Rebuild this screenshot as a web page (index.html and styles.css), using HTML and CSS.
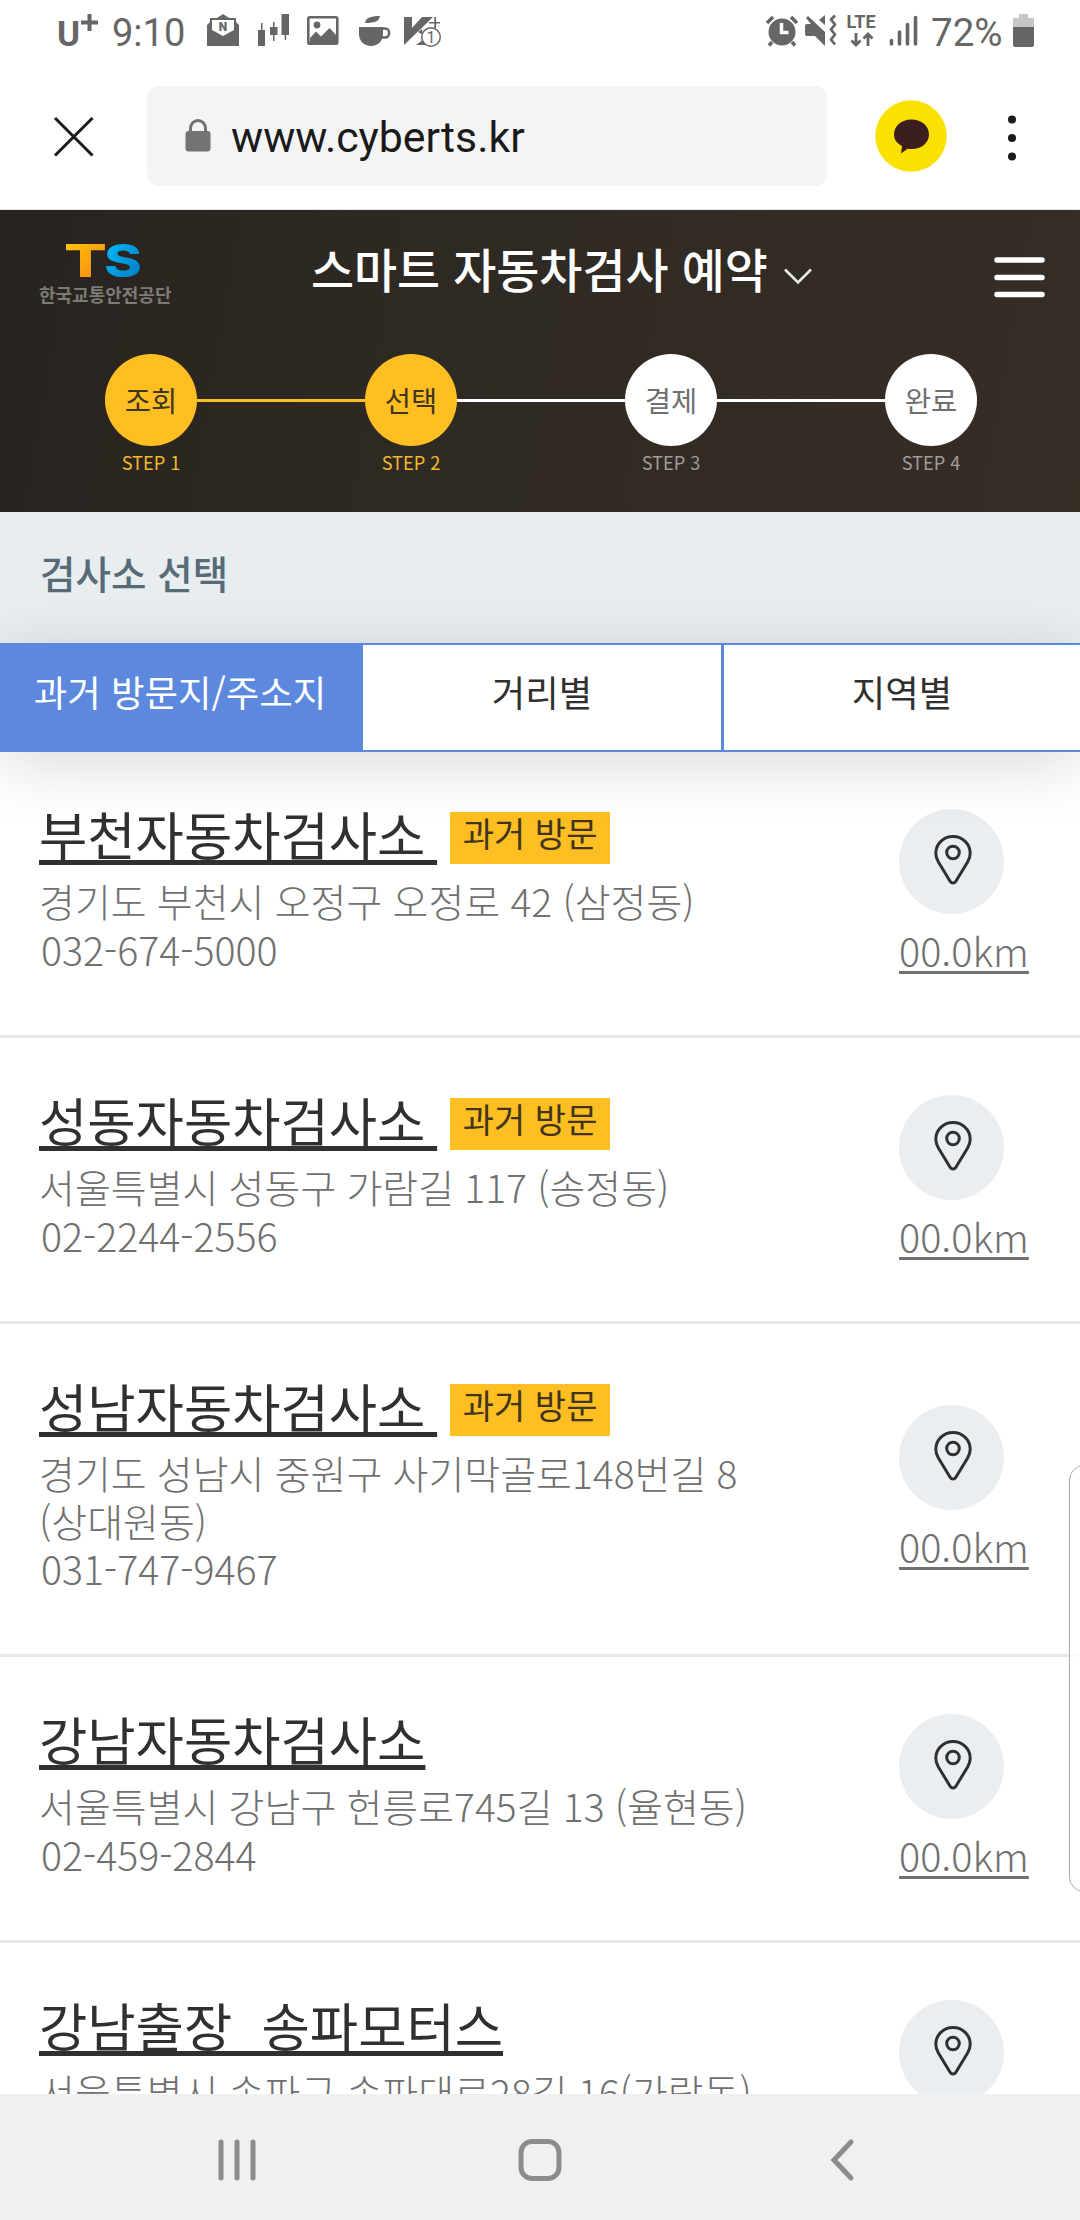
FILE: index.html
```html
<!DOCTYPE html>
<html lang="ko">
<head>
<meta charset="utf-8">
<title>스마트 자동차검사 예약</title>
<link rel="stylesheet" href="styles.css">
</head>
<body>
<svg class="defs" width="0" height="0">
  <symbol id="pin" viewBox="0 0 38 50">
    <path d="M19 1.600C9.500 1.600 1.800 9 1.800 18.200c0 3.200.9 5.800 2.600 8.800l11.700 19.200c1.500 2.400 4.300 2.400 5.800 0L33.600 27c1.700-3 2.600-5.600 2.600-8.800C36.200 9 28.500 1.600 19 1.600z"/>
    <circle cx="19" cy="17.500" r="6.300"/>
  </symbol>
</svg>
<div class="screen">
  <div class="status">
    <svg class="carrier" width="42" height="36" viewBox="0 0 42 36"><text x="0" y="34" class="carrier-u">U</text><path d="M24 10.500h17M32.500 2v17" stroke="#666" stroke-width="4"/></svg>
    <span class="time">9:10</span>
    <svg class="notices" width="236" height="36" viewBox="206 12 236 36" fill="#666">
      <path d="M207 25l3-3v-4h7l6-4 6 4h7v4l3 3v21h-32z"/><path d="M212 20h22v10l-11 6-11-6z" fill="#fff"/><text x="223" y="31" class="mail-n">N</text>
      <path d="M258 30h7v16h-7zM270 27h7.500v8H270zM281.500 14h7.500v21h-7.500zM261 23h1.500v8H261zM273 22h1.500v19H273zM284.700 34h1.500v6h-1.500z"/>
      <rect x="308.300" y="17.300" width="29" height="26.500" rx="1.500" fill="none" stroke="#666" stroke-width="2.600"/><circle cx="317" cy="25" r="3.400"/><path d="M310 38l6-6.500 5 5 8.500-8.500 7.500 8V43h-27z"/>
      <path d="M365 23c1-5 5-7 15-7-1 5-4 7-15 7zM359 27h24v7c0 7-5 12-12 12s-12-5-12-12z"/><path d="M381 28.500h4c5.500 0 5.500 9 0 9h-4" fill="none" stroke="#666" stroke-width="2.500"/>
      <path d="M404 17h8v11l10-11h11l-29 28zM416 45l8-6 3 6zM418 32l4-3 1 6zM429 22h11v1.500h-11zM434.300 17h1.800v11h-1.800z"/><circle cx="431" cy="37" r="9.300" fill="#fff" stroke="#666" stroke-width="1.500"/><text x="431" y="42.500" class="count">1</text>
    </svg>
    <svg class="system" width="156" height="36" viewBox="764 12 156 36" fill="#666">
      <circle cx="782" cy="32" r="13.500"/><path d="M767 23l6-6M797 23l-6-6M772 42l-3 3.500M792 42l3 3.500" stroke="#666" stroke-width="3.500"/><path d="M781.500 23v9.500h7" fill="none" stroke="#fff" stroke-width="3.500"/>
      <path d="M805 26q0-2 2-2h4l-5-6 2-2 17 16v14l-10-10h-8q-2 0-2-2zM825 15v10l-6-5z"/><path d="M835 15.500l-4 4 4 5-4 5 4 5-4 5 4 5" fill="none" stroke="#666" stroke-width="2.800" stroke-linejoin="round"/>
      <text x="861" y="28" class="lte">LTE</text><path d="M856 33v12M851.500 40.500L856 45l4.500-4.500M868 46V34M863.500 38.500L868 34l4.500 4.500" fill="none" stroke="#666" stroke-width="2.800"/>
      <path d="M891.500 40.500v3.500M899.500 32v12M907.500 24.500v19.500M915.500 17.500v26.500" stroke="#666" stroke-width="3.600" stroke-linecap="round"/>
    </svg>
    <span class="percent">72%</span>
    <svg class="battery" width="22" height="34" viewBox="0 0 22 34"><path d="M6 0h9v4h6v10H0V4h6z" fill="#c6c6c6"/><path d="M0 13h21v18q0 2-2 2H2q-2 0-2-2z" fill="#666"/></svg>
  </div>
  <div class="browser">
    <svg class="close" width="42" height="42" viewBox="0 0 42 42"><path d="M2 2l37.500 37.500M39.500 2L2 39.500" stroke="#1a1a1a" stroke-width="3"/></svg>
    <div class="address-bar">
      <svg width="26" height="34" viewBox="0 0 26 34"><path d="M5.500 14V9.500a7.500 8 0 0 1 15 0V14" fill="none" stroke="#737373" stroke-width="3"/><rect x="0.500" y="12" width="25" height="20.500" rx="3" fill="#737373"/></svg>
      <span class="url">www.cyberts.kr</span>
    </div>
    <svg class="talk" width="72" height="72" viewBox="0 0 72 72"><circle cx="36" cy="36" r="35.700" fill="#fae100"/><path d="M36.500 19.500c10 0 17.500 6.500 17.500 15s-7.500 14.500-17.500 14.500q-2 0-4-.3L26 53.500l1-7.500c-5-2.500-8-6.500-8-11.500 0-8.500 7.500-15 17.500-15z" fill="#3c1e1e"/></svg>
    <svg class="more" width="10" height="48" viewBox="0 0 10 48" fill="#1a1a1a"><circle cx="5" cy="5.500" r="4"/><circle cx="5" cy="24" r="4"/><circle cx="5" cy="42.500" r="4"/></svg>
  </div>
  <header class="hero">
    <div class="topbar">
      <div class="logo">
        <svg width="78" height="36" viewBox="0 0 78 36">
          <defs>
            <linearGradient id="amber" x1="0" y1="0" x2="1" y2="1"><stop offset="0" stop-color="#ffd000"/><stop offset="1" stop-color="#f47b20"/></linearGradient>
            <linearGradient id="azure" x1="0" y1="0" x2="1" y2="1"><stop offset="0" stop-color="#00c3ff"/><stop offset="1" stop-color="#0072bc"/></linearGradient>
          </defs>
          <text x="-1" y="35" class="mark" fill="url(#amber)" textLength="43" lengthAdjust="spacingAndGlyphs">T</text>
          <text x="39" y="35" class="mark" fill="url(#azure)" textLength="38" lengthAdjust="spacingAndGlyphs">S</text>
        </svg>
        <span>한국교통안전공단</span>
      </div>
      <h1>스마트 자동차검사 예약</h1>
      <svg class="chevron" width="30" height="20" viewBox="0 0 30 20"><path d="M2 2.500l13 13 13-13" fill="none" stroke="#e8e8e8" stroke-width="2.600"/></svg>
      <svg class="menu" width="52" height="42" viewBox="0 0 52 42"><path d="M3 3h45M3 20.500h45M3 37.500h45" stroke="#fff" stroke-width="5.500" stroke-linecap="round"/></svg>
    </div>
    <ol class="steps">
      <li class="done"><b>조회</b><small>STEP 1</small></li>
      <li class="done"><b>선택</b><small>STEP 2</small></li>
      <li><b>결제</b><small>STEP 3</small></li>
      <li><b>완료</b><small>STEP 4</small></li>
    </ol>
  </header>
  <h2 class="section">검사소 선택</h2>
  <nav class="tabs"><a class="active">과거 방문지/주소지</a><a>거리별</a><a>지역별</a></nav>
  <main class="list">
    <article>
      <div class="info"><div class="head"><a class="name">부천자동차검사소&nbsp;</a><span class="badge">과거 방문</span></div>
        <p>경기도 부천시 오정구 오정로 42 (삼정동)</p><p class="tel">032-674-5000</p></div>
      <div class="place"><i><svg><use href="#pin"/></svg></i><a>00.0km</a></div>
    </article>
    <article>
      <div class="info"><div class="head"><a class="name">성동자동차검사소&nbsp;</a><span class="badge">과거 방문</span></div>
        <p>서울특별시 성동구 가람길 117 (송정동)</p><p class="tel">02-2244-2556</p></div>
      <div class="place"><i><svg><use href="#pin"/></svg></i><a>00.0km</a></div>
    </article>
    <article>
      <div class="info"><div class="head"><a class="name">성남자동차검사소&nbsp;</a><span class="badge">과거 방문</span></div>
        <p>경기도 성남시 중원구 사기막골로148번길 8<br>(상대원동)</p><p class="tel">031-747-9467</p></div>
      <div class="place"><i><svg><use href="#pin"/></svg></i><a>00.0km</a></div>
    </article>
    <article>
      <div class="info"><div class="head"><a class="name">강남자동차검사소</a></div>
        <p>서울특별시 강남구 헌릉로745길 13 (율현동)</p><p class="tel">02-459-2844</p></div>
      <div class="place"><i><svg><use href="#pin"/></svg></i><a>00.0km</a></div>
    </article>
    <article>
      <div class="info"><div class="head"><a class="name">강남출장_송파모터스</a></div>
        <p>서울특별시 송파구 송파대로28길 16(가락동)</p></div>
      <div class="place"><i><svg><use href="#pin"/></svg></i></div>
    </article>
  </main>
  <footer class="keys">
    <svg width="38" height="42" viewBox="0 0 38 42"><path d="M3 3v36M19 3v36M35 3v36" stroke="#8c8c8c" stroke-width="5" stroke-linecap="round"/></svg>
    <svg class="home" width="44" height="42" viewBox="0 0 44 42"><rect x="3" y="2.500" width="38" height="37" rx="11" fill="none" stroke="#8c8c8c" stroke-width="5"/></svg>
    <svg width="26" height="42" viewBox="0 0 26 42"><path d="M22 3L5 21l17 18" fill="none" stroke="#8c8c8c" stroke-width="5" stroke-linecap="round"/></svg>
  </footer>
  <div class="edge-handle"></div>
</div>
</body>
</html>
```
FILE: styles.css
```css
* { box-sizing: border-box; margin: 0; padding: 0; }
body { background: #fff; font-family: "Noto Sans CJK KR", sans-serif; color: #303030; }
.defs { display: block; position: absolute; }
svg { flex: none; display: block; overflow: visible; }
.screen { position: relative; width: 1080px; height: 2220px; overflow: hidden; display: flex; flex-direction: column; }

.status { height: 62px; flex: none; display: flex; align-items: flex-start; padding: 12px 45px 0 57px; font: 400 38px/40px Roboto, sans-serif; color: #666; }
.carrier-u { font: 700 35px Roboto, sans-serif; fill: #666; }
.time { width: 75px; margin: 1px 0 0 13px; white-space: nowrap; }
.notices { margin-left: 19px; }
.mail-n { font: 900 12px Roboto, sans-serif; text-anchor: middle; }
.count { font: 400 16px Roboto, sans-serif; text-anchor: middle; }
.system { margin-left: auto; }
.lte { font: 700 18px Roboto, sans-serif; text-anchor: middle; }
.percent { width: 72px; margin: 1px 0 0 11px; font-size: 38.5px; white-space: nowrap; }
.battery { margin: 2px 0 0 10px; }

.browser { height: 148px; flex: none; display: flex; align-items: center; padding: 0 63px 0 53px; border-bottom: 1px solid #e6e6e6; }
.close { margin-top: 3px; }
.address-bar { width: 680px; height: 100px; margin-left: 52px; border-radius: 12px; background: #f4f4f4; display: flex; align-items: center; padding-left: 38px; }
.url { margin: 3px 0 0 20px; font: 400 42.8px/50px Roboto, sans-serif; color: #1a1a1a; }
.talk { margin-left: 48px; }
.more { margin: 4px 0 0 auto; }

.hero { height: 302px; flex: none; background: linear-gradient(100deg, #28231e, #302a24 45%, #362d25); }
.topbar { height: 144px; display: flex; align-items: flex-start; padding: 32px 34px 0 39px; }
.logo { width: 135px; display: flex; flex-direction: column; }
.logo svg { margin-left: 26px; }
.mark { font: 800 45px Inter, sans-serif; }
.logo span { margin-top: 5px; font-size: 18px; line-height: 22px; font-weight: 700; color: #7d7a77; white-space: nowrap; }
h1 { margin: -4px 0 0 137px; color: #fff; font-weight: 500; font-size: 46.8px; line-height: 60px; white-space: nowrap; }
.chevron { margin: 25px 0 0 15px; }
.menu { margin: 15px 0 0 auto; }
.steps { list-style: none; display: grid; grid-template-columns: repeat(4, 260px); margin-left: 21px; }
.steps li { display: flex; flex-direction: column; align-items: center; color: #a09c98; position: relative; }
.steps li + li::before { content: ""; position: absolute; right: 176px; top: 45px; width: 168px; height: 3px; background: #fff; }
.steps .done + .done::before { background: #ffbf23; }
.steps b { width: 92px; height: 92px; border-radius: 50%; background: #fff; color: #707070; font-weight: 400; font-size: 28.500px; line-height: 91px; text-align: center; }
.steps small { font-size: 18.200px; line-height: 26px; margin-top: 3px; }
.steps .done { color: #f4b92c; }
.steps .done b { background: #ffbf23; color: #40341c; }

.section { height: 131px; flex: none; background: #e8edf0; padding: 34px 40px; font-weight: 500; font-size: 38.600px; line-height: 52px; color: #566b75; }
.tabs { height: 109px; flex: none; position: relative; z-index: 1; display: grid; grid-template-columns: 363px 361px 356px; background: #fff; border: solid #5c88de; border-width: 2px 0; box-shadow: 0 12px 64px rgba(0, 0, 0, .15); }
.tabs a { text-align: center; font-size: 36.400px; line-height: 93px; }
.tabs a:nth-child(2) { border-right: 3px solid #5c88de; }
.tabs .active { background: #5c88de; color: #fff; padding-right: 3px; }

.list { flex: 1; min-height: 0; overflow: hidden; }
article { min-height: 286px; display: flex; align-items: center; justify-content: space-between; border-bottom: 3px solid #e2e8eb; padding: 0 52px 0 39px; }
.info { align-self: flex-start; padding: 53px 0 62.500px; }
.head { display: flex; height: 72px; }
.name { font-size: 52.500px; line-height: 56px; font-weight: 400; word-spacing: -3px; white-space: nowrap; text-decoration: underline 5px; text-decoration-skip-ink: none; text-underline-offset: 4px; }
.badge { width: 160px; height: 52px; margin: 7px 0 0 13px; background: #ffbf23; color: #40341c; font-size: 34px; line-height: 42px; text-align: center; }
.info p { font-size: 39px; line-height: 47.500px; font-weight: 300; word-spacing: -.7px; color: #707070; white-space: nowrap; }
.info .tel { padding-left: 2px; font-size: 39.300px; }
.place { width: 129px; height: 169px; color: #707070; }
.place i { width: 105px; height: 105px; border-radius: 50%; background: #eaeef1; display: flex; padding: 26px 0 0 35px; }
.place i svg { width: 38px; height: 50px; fill: none; stroke: #303030; stroke-width: 3; }
.place a { display: block; margin-top: 8px; font-weight: 300; font-size: 39.600px; line-height: 56px; white-space: nowrap; text-decoration: underline 3px; text-decoration-skip-ink: none; text-underline-offset: 4px; }

.keys { height: 126px; flex: none; background: #f0f0f0; display: flex; justify-content: space-between; align-items: flex-start; padding: 45px 225px 0 218px; position: relative; z-index: 1; }
.home { margin-right: 5px; }
.edge-handle { position: absolute; left: 1069px; top: 1465px; width: 30px; height: 427px; border: 1px solid #aaa; border-radius: 16px; background: rgba(255, 255, 255, .8); }
```
